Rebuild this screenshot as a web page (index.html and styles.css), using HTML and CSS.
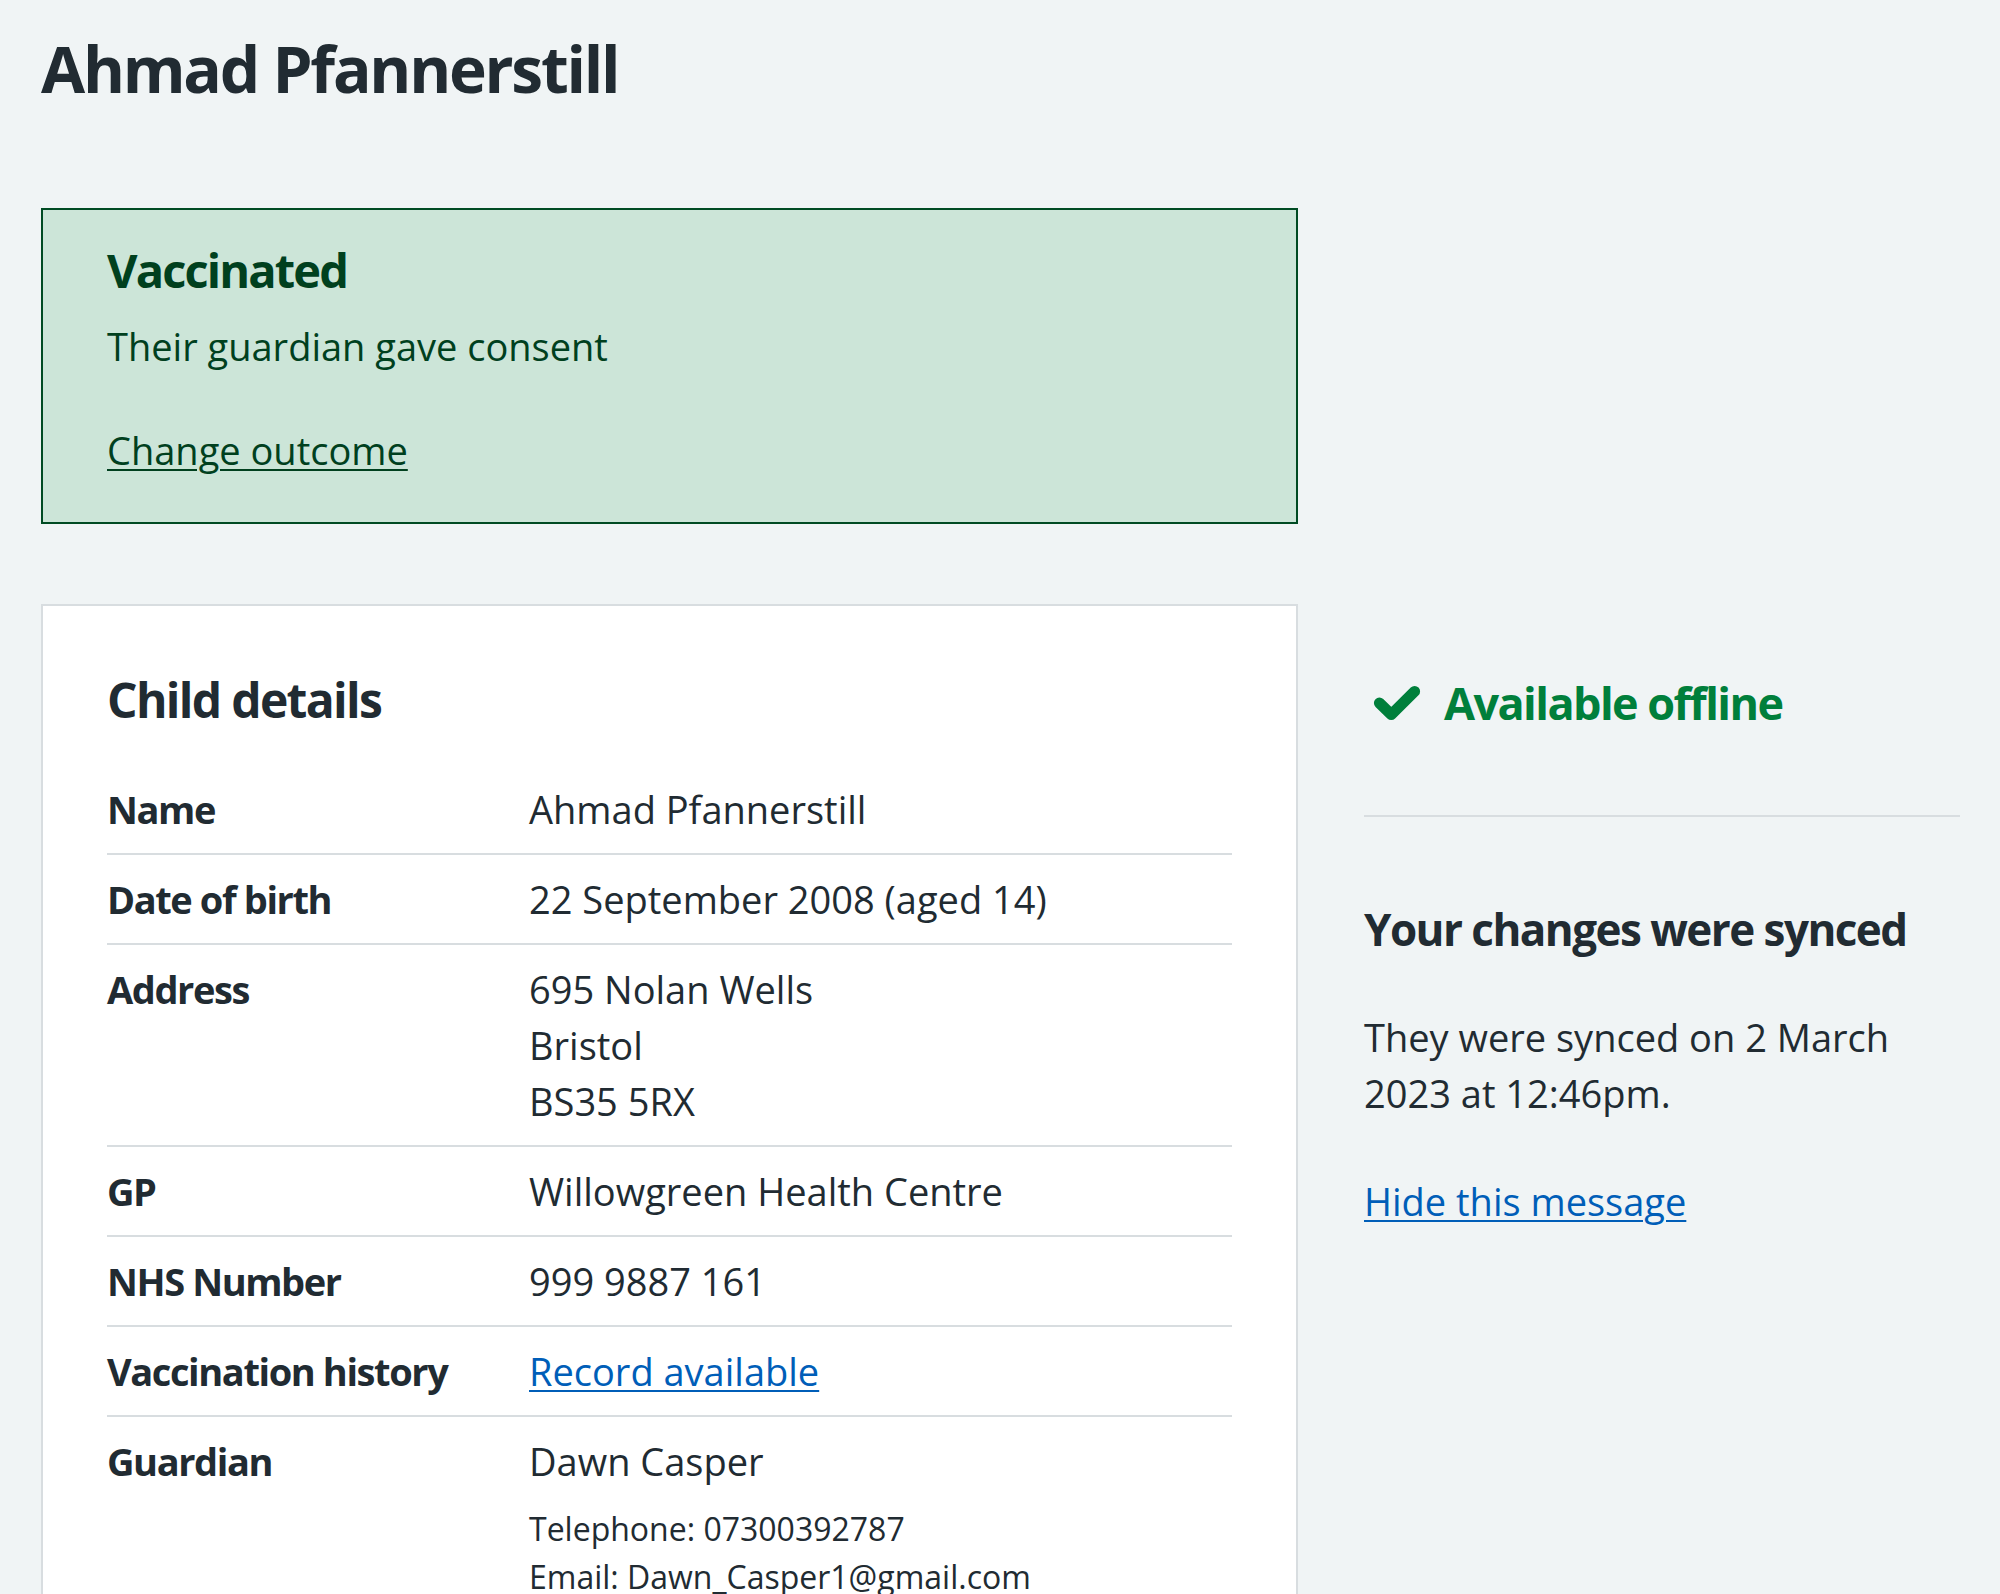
FILE: index.html
```html
<!DOCTYPE html>
<html lang="en">
<head>
<meta charset="utf-8">
<title>Ahmad Pfannerstill</title>
<link rel="stylesheet" href="styles.css">
</head>
<body>
<main class="page">
  <h1 class="title">Ahmad Pfannerstill</h1>

  <div class="row">
    <div class="col-main">
      <div class="panel">
        <h2 class="panel-heading">Vaccinated</h2>
        <p class="panel-text">Their guardian gave consent</p>
        <a class="panel-link" href="#">Change outcome</a>
      </div>
    </div>
  </div>

  <div class="row row-second">
    <div class="col-main">
      <section class="card">
        <h2 class="card-heading">Child details</h2>
        <dl class="summary">
          <div class="summary-row">
            <dt class="summary-key">Name</dt>
            <dd class="summary-value">Ahmad Pfannerstill</dd>
          </div>
          <div class="summary-row">
            <dt class="summary-key">Date of birth</dt>
            <dd class="summary-value">22 September 2008 (aged 14)</dd>
          </div>
          <div class="summary-row">
            <dt class="summary-key">Address</dt>
            <dd class="summary-value">695 Nolan Wells<br>Bristol<br>BS35 5RX</dd>
          </div>
          <div class="summary-row">
            <dt class="summary-key">GP</dt>
            <dd class="summary-value">Willowgreen Health Centre</dd>
          </div>
          <div class="summary-row">
            <dt class="summary-key">NHS Number</dt>
            <dd class="summary-value">999 9887 161</dd>
          </div>
          <div class="summary-row">
            <dt class="summary-key">Vaccination history</dt>
            <dd class="summary-value"><a class="link" href="#">Record available</a></dd>
          </div>
          <div class="summary-row summary-row-last">
            <dt class="summary-key">Guardian</dt>
            <dd class="summary-value">
              <p class="guardian-name">Dawn Casper</p>
              <p class="guardian-meta">Telephone: 07300392787<br>Email: Dawn_Casper1@gmail.com</p>
            </dd>
          </div>
        </dl>
      </section>
    </div>

    <aside class="col-side">
      <div class="offline">
        <svg class="tick" viewBox="0 0 24 24" aria-hidden="true">
          <path d="M18.4 7.8l-8.5 8.4L5.6 12" fill="none" stroke="#007f3b" stroke-width="4" stroke-linecap="round" stroke-linejoin="round"/>
        </svg>
        <span class="offline-text">Available offline</span>
      </div>
      <hr class="divider">
      <h2 class="side-heading">Your changes were synced</h2>
      <p class="side-text">They were synced on 2 March 2023 at 12:46pm.</p>
      <a class="link side-link" href="#">Hide this message</a>
    </aside>
  </div>
</main>
</body>
</html>
```

FILE: styles.css
```css
html, body {
  margin: 0;
  padding: 0;
}

body {
  background: #f0f4f5;
  color: #212b32;
  font-family: "Open Sans", "Noto Sans", sans-serif;
  font-size: 38px;
  line-height: 56px;
}

.page {
  padding: 29px 41px 0;
}

.title {
  margin: 0 0 99px;
  font-size: 64px;
  line-height: 80px;
  font-weight: 700;
  letter-spacing: -0.035em;
  color: #212b32;
}

.row {
  display: flex;
  gap: 66px;
  align-items: flex-start;
}

.row-second {
  margin-top: 80px;
}

.col-main {
  width: 1257px;
  flex: none;
}

.col-side {
  width: 596px;
  flex: none;
  padding-top: 66px;
}

/* Panel */
.panel {
  background: #cce5d8;
  border: 2px solid #004b23;
  padding: 28px 64px 44px;
  color: #00401e;
}

.panel-heading {
  margin: 0 0 16px;
  font-size: 47px;
  line-height: 64px;
  font-weight: 700;
  letter-spacing: -0.04em;
}

.panel-text {
  margin: 0 0 48px;
}

.panel-link {
  color: #00401e;
  text-decoration: underline;
  text-decoration-thickness: 2px;
  text-underline-offset: 4px;
}

/* Card */
.card {
  background: #ffffff;
  border: 2px solid #d8dde0;
  padding: 62px 64px 64px;
}

.card-heading {
  margin: 0 0 33px;
  font-size: 48px;
  line-height: 64px;
  font-weight: 700;
  letter-spacing: -0.035em;
}

.summary {
  margin: 0;
}

.summary-row {
  display: grid;
  grid-template-columns: 422px 1fr;
  border-bottom: 2px solid #d8dde0;
}

.summary-row-last {
  border-bottom: none;
}

.summary-key,
.summary-value {
  margin: 0;
  padding: 16px 0;
}

.summary-key {
  font-weight: 700;
  letter-spacing: -0.037em;
}

.guardian-name {
  margin: 0 0 16px;
}

.guardian-meta {
  margin: 0;
  font-size: 32px;
  line-height: 48px;
}

.link {
  color: #005eb8;
  text-decoration: underline;
  text-decoration-thickness: 2px;
  text-underline-offset: 4px;
}

/* Sidebar */
.offline {
  display: flex;
  align-items: center;
  gap: 14px;
  height: 66px;
}

.tick {
  width: 66px;
  height: 66px;
  flex: none;
}

.offline-text {
  font-size: 45px;
  line-height: 64px;
  font-weight: 700;
  letter-spacing: -0.035em;
  color: #007f3b;
}

.divider {
  margin: 79px 0 0;
  border: 0;
  border-top: 2px solid #d8dde0;
  height: 0;
}

.side-heading {
  margin: 80px 0 48px;
  font-size: 44px;
  line-height: 64px;
  font-weight: 700;
  letter-spacing: -0.035em;
}

.side-text {
  margin: 0 0 52px;
}

.side-link {
  display: inline-block;
}
```
